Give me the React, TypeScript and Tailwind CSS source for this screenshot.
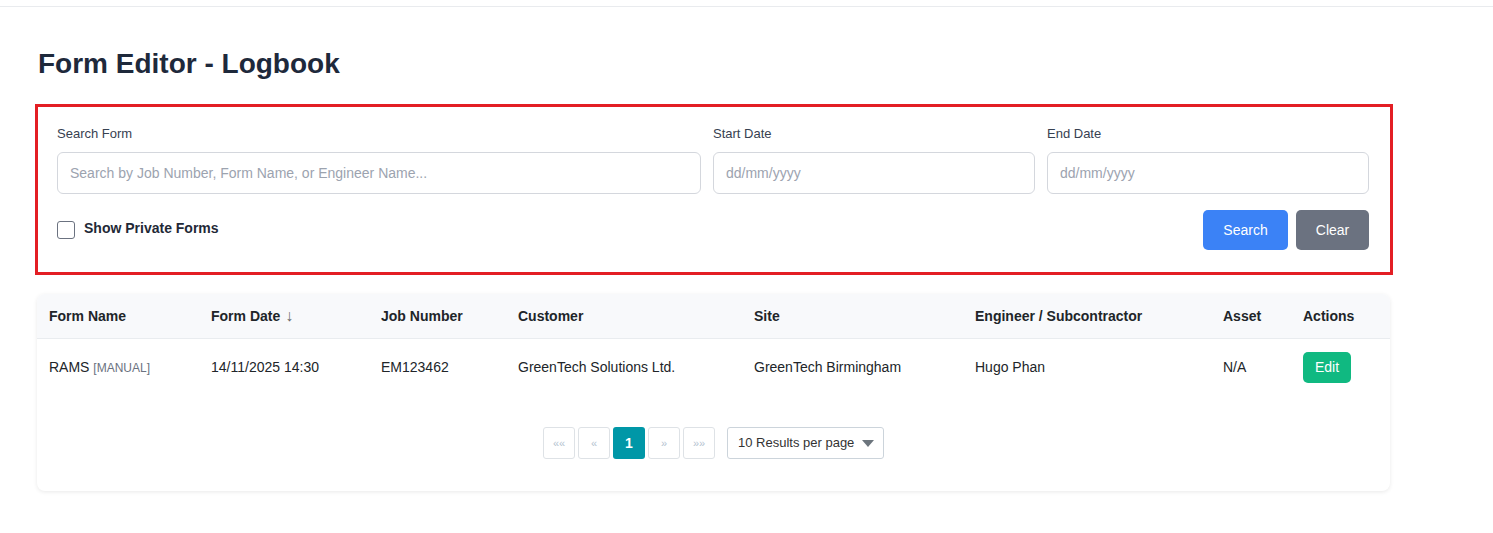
import React from 'react';

const columns = [
  { label: 'Form Name', width: 162 },
  { label: 'Form Date', width: 170, sort: true },
  { label: 'Job Number', width: 137 },
  { label: 'Customer', width: 236 },
  { label: 'Site', width: 221 },
  { label: 'Engineer / Subcontractor', width: 248 },
  { label: 'Asset', width: 80 },
  { label: 'Actions', width: 99 },
];

const PageButton = ({ children, active = false }: { children: React.ReactNode; active?: boolean }) => (
  <button
    className={
      active
        ? 'w-[32px] h-[32px] rounded-[3px] bg-[#0097a7] text-white text-[14px] font-bold flex items-center justify-center'
        : 'w-[32px] h-[32px] rounded-[3px] border border-[#dee2e6] bg-white text-[#b4c3d0] text-[11px] flex items-center justify-center'
    }
  >
    {children}
  </button>
);

export default function App() {
  return (
    <div className="min-h-screen bg-white font-['Liberation_Sans',Arial,sans-serif] text-[#212529]">
      {/* top bar */}
      <div className="h-[7px] border-b border-[#e9ebee]" />

      <div className="pl-[35px] pt-[39px]">
        <h1 className="text-[28px] leading-[36px] font-bold text-[#1e293b] pl-[3px] mb-[22px]">Form Editor - Logbook</h1>

        {/* Filters */}
        <div className="w-[1358px] border-[3px] border-[#e31e24] bg-white pl-[19px] pr-[21px] pt-[18px] pb-[22px]">
          <div className="grid grid-cols-[644px_322px_322px] gap-x-[12px]">
            <div>
              <label className="block text-[13px] leading-[18px] text-[#374151] mb-[9px]">Search Form</label>
              <input
                className="w-full h-[42px] rounded-[6px] border border-[#d4d7dd] px-[12px] text-[14px] placeholder:text-[#9ca3af] outline-none"
                placeholder="Search by Job Number, Form Name, or Engineer Name..."
              />
            </div>
            <div>
              <label className="block text-[13px] leading-[18px] text-[#374151] mb-[9px]">Start Date</label>
              <input
                className="w-full h-[42px] rounded-[6px] border border-[#d4d7dd] px-[12px] text-[14px] placeholder:text-[#9ca3af] outline-none"
                placeholder="dd/mm/yyyy"
              />
            </div>
            <div>
              <label className="block text-[13px] leading-[18px] text-[#374151] mb-[9px]">End Date</label>
              <input
                className="w-full h-[42px] rounded-[6px] border border-[#d4d7dd] px-[12px] text-[14px] placeholder:text-[#9ca3af] outline-none"
                placeholder="dd/mm/yyyy"
              />
            </div>
          </div>

          <div className="mt-[16px] flex items-center justify-between">
            <label className="flex items-center gap-[9px]">
              <span className="w-[18px] h-[18px] rounded-[3px] border border-[#6b7280] bg-white" />
              <span className="text-[14px] font-bold text-[#1f2937] -mt-[4px]">Show Private Forms</span>
            </label>
            <div className="flex gap-[8px]">
              <button className="w-[85px] h-[40px] rounded-[5px] bg-[#3b82f6] text-white text-[14px]">Search</button>
              <button className="w-[73px] h-[40px] rounded-[5px] bg-[#6b7280] text-white text-[14px]">Clear</button>
            </div>
          </div>
        </div>

        {/* Table */}
        <div className="mt-[19px] ml-[2px] w-[1353px] rounded-[8px] bg-white shadow-[0_1px_4px_rgba(0,0,0,0.09)] overflow-hidden">
          <table className="w-full table-fixed border-collapse text-[14px]">
            <colgroup>
              {columns.map((c) => (
                <col key={c.label} style={{ width: c.width }} />
              ))}
            </colgroup>
            <thead>
              <tr className="h-[44px] bg-[#f8f9fb] border-b border-[#e9ecef]">
                {columns.map((c) => (
                  <th key={c.label} className="px-[12px] pt-[2px] text-left font-bold text-[#212529] whitespace-nowrap">
                    {c.label}
                    {c.sort && <span className="ml-[5px] text-[16px] leading-[14px] font-normal text-[#6b6b6b]">↓</span>}
                  </th>
                ))}
              </tr>
            </thead>
            <tbody>
              <tr className="h-[58px]">
                <td className="px-[12px] whitespace-nowrap">
                  RAMS <span className="text-[12px] text-[#6b7280]">[MANUAL]</span>
                </td>
                <td className="px-[12px] whitespace-nowrap">14/11/2025 14:30</td>
                <td className="px-[12px]">EM123462</td>
                <td className="px-[12px]">GreenTech Solutions Ltd.</td>
                <td className="px-[12px]">GreenTech Birmingham</td>
                <td className="px-[12px]">Hugo Phan</td>
                <td className="px-[12px]">N/A</td>
                <td className="px-[12px]">
                  <button className="w-[48px] h-[31px] rounded-[5px] bg-[#10b981] text-white text-[14px]">Edit</button>
                </td>
              </tr>
            </tbody>
          </table>

          <div className="flex justify-center items-center pt-[31px] pb-[32px]">
            <div className="flex gap-[3px]">
              <PageButton>««</PageButton>
              <PageButton>«</PageButton>
              <PageButton active>1</PageButton>
              <PageButton>»</PageButton>
              <PageButton>»»</PageButton>
            </div>
            <div className="ml-[12px] w-[157px] h-[32px] rounded-[3px] border border-[#ccd4db] flex items-center justify-between pl-[10px] pr-[9px] text-[13px] text-[#333] whitespace-nowrap">
              <span>10 Results per page</span>
              <svg width="12" height="7" viewBox="0 0 12 7">
                <path d="M0 0h12L6 7z" fill="#6c757d" />
              </svg>
            </div>
          </div>
        </div>
      </div>
    </div>
  );
}
